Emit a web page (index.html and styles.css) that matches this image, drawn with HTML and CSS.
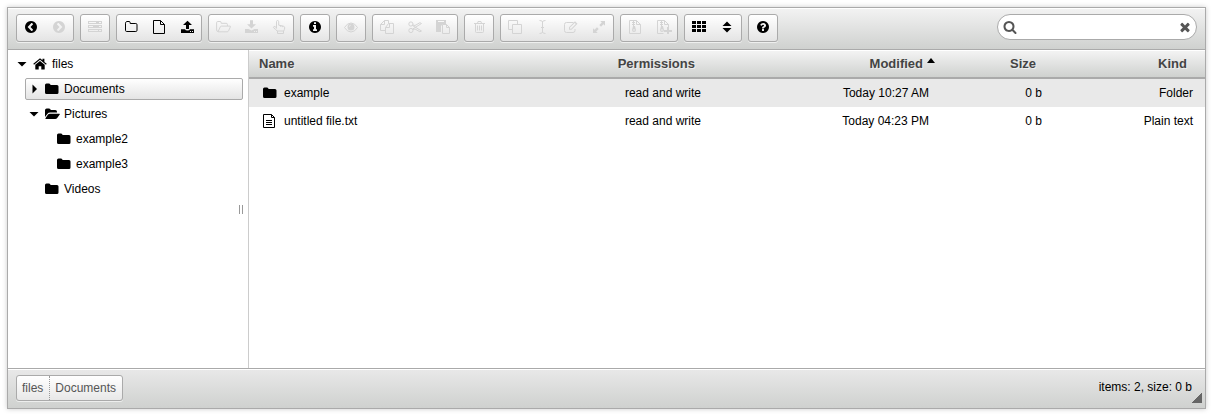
FILE: index.html
```html
<!DOCTYPE html>
<html lang="en">
<head>
<meta charset="utf-8">
<title>File manager</title>
<link rel="stylesheet" href="styles.css">
</head>
<body>
<svg class="sprite" aria-hidden="true">
  <symbol id="i-back" viewBox="0 0 1792 1792"><path d="M1037 1395l102-102q19-19 19-45t-19-45l-307-307 307-307q19-19 19-45t-19-45l-102-102q-19-19-45-19t-45 19l-454 454q-19 19-19 45t19 45l454 454q19 19 45 19t45-19zm627-499q0 209-103 385.5t-279.5 279.5-385.5 103-385.5-103-279.5-279.5-103-385.5 103-385.5 279.5-279.5 385.5-103 385.5 103 279.5 279.5 103 385.5z"/></symbol>
  <symbol id="i-forward" viewBox="0 0 1792 1792"><path transform="translate(1792 0) scale(-1 1)" d="M1037 1395l102-102q19-19 19-45t-19-45l-307-307 307-307q19-19 19-45t-19-45l-102-102q-19-19-45-19t-45 19l-454 454q-19 19-19 45t19 45l454 454q19 19 45 19t45-19zm627-499q0 209-103 385.5t-279.5 279.5-385.5 103-385.5-103-279.5-279.5-103-385.5 103-385.5 279.5-279.5 385.5-103 385.5 103 279.5 279.5 103 385.5z"/></symbol>
  <symbol id="i-mount" viewBox="0 0 14 14"><path fill-rule="evenodd" d="M0 1h14v3H0zM1 2v1h7V2zM11 2v1h2V2zM0 5h14v3H0zM1 6v1h4V6zM11 6v1h2V6zM0 9h14v3H0zM1 10v1h9v-1zM11 10v1h2v-1z"/></symbol>
  <symbol id="i-folder-o" viewBox="0 0 14 14"><path class="line" d="M1.5 3.2Q1.5 2 2.700 1.500H5q1.200 0 1.200 1.200v.8h5.600q1.200 0 1.200 1.200v5.600q0 1.200-1.200 1.200H2.700q-1.200 0-1.200-1.200z"/></symbol>
  <symbol id="i-file-o" viewBox="0 0 14 14"><path class="line" d="M8.5.5h-7v13h11v-9zM8.5.5v4h4"/></symbol>
  <symbol id="i-upload" viewBox="0 0 14 14"><path d="M7.500.7 12 5H9v4H6V5H3zM1 9.300h4q.4 1.200 2.500 1.200T10 9.300h4V13H1zM10 11v1h1v-1zM12 11v1h1v-1z" fill-rule="evenodd"/></symbol>
  <symbol id="i-download" viewBox="0 0 14 14"><path d="M6 .3h3v4h3L7.500 8.600 3 4.300H6zM1 9h3.500l3 1.500 3-1.500H14v4H1zM10 11v1h1v-1zM12 11v1h1v-1z" fill-rule="evenodd"/></symbol>
  <symbol id="i-open-o" viewBox="0 0 15 14"><path class="line" d="M2.500 11.300Q.6 12 .6 10V2.700q0-1.200 1.200-1.200H4q1.200 0 1.200 1.200v.6h5q1.200 0 1.200 1.200V6M2 11.800l2.300-5q.3-.7 1.200-.7H14q.8 0 .4.800l-1.900 4q-.4.900-1.200.900z"/></symbol>
  <symbol id="i-hand" viewBox="0 0 14 14"><path class="line" d="M4.500 8.500V1.700q0-1.200 1.100-1.200t1.100 1.200v3.500l4.500.9q1.500.3 1.500 1.700 0 1.500-1 3.200H5Q4 9.300 2 8.200 1 7.500 1.800 6.700q1-.8 2.700 1.100M5.500 11v2.500h6V11M8.800 5.500V7M10.700 6v1.200"/></symbol>
  <symbol id="i-info" viewBox="0 0 1792 1792"><path d="M1152 1376v-160q0-14-9-23t-23-9h-96v-512q0-14-9-23t-23-9h-320q-14 0-23 9t-9 23v160q0 14 9 23t23 9h96v320h-96q-14 0-23 9t-9 23v160q0 14 9 23t23 9h448q14 0 23-9t9-23zm-128-896v-160q0-14-9-23t-23-9h-192q-14 0-23 9t-9 23v160q0 14 9 23t23 9h192q14 0 23-9t9-23zm640 416q0 209-103 385.5t-279.5 279.5-385.5 103-385.5-103-279.5-279.5-103-385.5 103-385.5 279.5-279.5 385.5-103 385.5 103 279.500 279.500 103 385.500z"/></symbol>
  <symbol id="i-eye" viewBox="0 0 14 14"><path class="line" d="M.5 7.500Q3.200 3 7 3t6.500 4.500Q10.800 12 7 12T.5 7.500z"/><path fill-rule="evenodd" d="M7 3.500a3.500 3.500 0 1 0 0 7 3.500 3.500 0 0 0 0-7zM5 6.800Q5 5 7 4.700v.6Q5.700 5.600 5.600 6.800z"/></symbol>
  <symbol id="i-copy" viewBox="0 0 14 14"><path class="line" d="M5.500 10.500h-5v-6l4-4h4v3M4.500.5v4h-4M8.500 3.500h5v10h-8v-6zM9.500 3.500v4h-4"/></symbol>
  <symbol id="i-cut" viewBox="0 0 14 14"><circle class="line" cx="2.900" cy="4" r="2.100"/><circle class="line" cx="2.900" cy="10.500" r="2.100"/><path class="line" d="M4.500 5.500 13.500 11l-1.600.8L7 9 4.700 9.500M4.700 9 13.500 3.500l-1.600-.8L7 5.500 4.800 5"/></symbol>
  <symbol id="i-paste" viewBox="0 0 14 14"><path fill-rule="evenodd" d="M0 0h10v4H7L5 6v6H0zM2 1v1h6V1z"/><path class="line" d="M10.500 4.500h-4v9h7v-6zM10.500 4.500v3h3"/></symbol>
  <symbol id="i-trash" viewBox="0 0 14 14"><path class="line" d="M2 3.500h11M5.500 3.500 6 1.500h3l.5 2M3.500 3.500v8q0 1 1 1h6q1 0 1-1v-8M5.500 5.500v5M7.500 5.500v5M9.500 5.500v5"/></symbol>
  <symbol id="i-dup" viewBox="0 0 14 14"><path class="line" d="M4 9.500H.5v-9h9V4M4.500 4.500h9v9h-9z"/></symbol>
  <symbol id="i-rename" viewBox="0 0 14 14"><path class="line" d="M3.500.5q3 0 3 1.500 0-1.500 3-1.500M3.500 13.500q3 0 3-1.500 0 1.500 3 1.500M6.500 2v10M5 7.500h3"/></symbol>
  <symbol id="i-edit" viewBox="0 0 14 14"><path class="line" d="M9.500 2.500h-7q-2 0-2 2v6q0 2 2 2h6.500q2 0 2-2V9"/><path fill-rule="evenodd" d="M11 1.200 13.500 3.700 7.500 9.700H5V7.200zM6 7.500v1.200h1.200L11.800 4 10.700 3z"/></symbol>
  <symbol id="i-resize" viewBox="0 0 14 14"><path d="M8.300 1H13v4.700L11.500 4.200 9 6.700 7.300 5 9.800 2.500zM1 8.300 2.500 9.800 5 7.300 6.700 9 4.200 11.500 5.700 13H1z"/></symbol>
  <symbol id="i-zip" viewBox="0 0 14 14"><path class="line" d="M8.500.5h-7v13h11v-9zM8.500.5v4h4"/><path fill-rule="evenodd" d="M5 1h1v1h1v1H6v1h1v1H6v1h1l1 4q0 2-2 2t-2-2l1-4V5H4V4h1V3H4V2h1zM5 9.500v1h2v-1z"/></symbol>
  <symbol id="i-zip-add" viewBox="0 0 16 14"><path class="line" d="M7.500 13.500h-6V.5h7l4 4v3M8.500.5v4h4"/><path fill-rule="evenodd" d="M5 1h1v1h1v1H6v1h1v1H6v1h1l1 4q0 2-2 2t-2-2l1-4V5H4V4h1V3H4V2h1zM5 9.500v1h2v-1z"/><path d="M11 7h2v3h3v2h-3v3h-2v-3H8v-2h3z"/></symbol>
  <symbol id="i-grid" viewBox="0 0 14 14"><path d="M0 1h4v3H0zM5 1h4v3H5zM10 1h4v3h-4zM0 5h4v3H0zM5 5h4v3H5zM10 5h4v3h-4zM0 9h4v3H0zM5 9h4v3H5zM10 9h4v3h-4z"/></symbol>
  <symbol id="i-sort" viewBox="0 0 14 14"><path d="M7 1.500 11.500 6h-9zM2.500 8h9L7 12.500z"/></symbol>
  <symbol id="i-help" viewBox="0 0 1792 1792"><path d="M1024 1376v-192q0-14-9-23t-23-9h-192q-14 0-23 9t-9 23v192q0 14 9 23t23 9h192q14 0 23-9t9-23zm256-672q0-88-55.5-163t-138.500-116-170-41q-243 0-371 213-15 24 8 42l132 100q7 6 19 6 16 0 25-12 53-68 86-92 34-24 86-24 48 0 85.500 26t37.500 59q0 38-20 61t-68 45q-63 28-115.500 86.500t-52.500 125.500v36q0 14 9 23t23 9h192q14 0 23-9t9-23q0-19 21.500-49.500t54.500-49.500q32-18 49-28.500t46-35 44.500-48 28-60.500 12.500-81zm384 192q0 209-103 385.500t-279.500 279.500-385.500 103-385.500-103-279.500-279.500-103-385.500 103-385.500 279.500-279.500 385.500-103 385.500 103 279.500 279.500 103 385.500z"/></symbol>
  <symbol id="i-search" viewBox="0 0 1792 1792"><path d="M1216 832q0-185-131.500-316.500t-316.500-131.500-316.500 131.500-131.500 316.500 131.500 316.500 316.500 131.500 316.500-131.500 131.500-316.500zm512 832q0 52-38 90t-90 38q-54 0-90-38l-343-342q-179 124-399 124-143 0-273.500-55.500t-225-150-150-225-55.500-273.500 55.500-273.500 150-225 225-150 273.500-55.500 273.500 55.500 225 150 150 225 55.500 273.500q0 220-124 399l343 343q37 37 37 90z"/></symbol>
  <symbol id="i-times" viewBox="0 0 1792 1792"><path d="M1490 1322q0 40-28 68l-136 136q-28 28-68 28t-68-28l-294-294-294 294q-28 28-68 28t-68-28l-136-136q-28-28-28-68t28-68l294-294-294-294q-28-28-28-68t28-68l136-136q28-28 68-28t68 28l294 294 294-294q28-28 68-28t68 28l136 136q28 28 28 68t-28 68l-294 294 294 294q28 28 28 68z"/></symbol>
  <symbol id="i-folder" viewBox="0 0 14 14"><path d="M0 3Q0 1.500 1.500 1.500H4Q5.500 1.500 5.500 3H12q1.500 0 1.500 1.500v6q0 1.500-1.500 1.500H1.500Q0 12 0 10.500z"/></symbol>
  <symbol id="i-folder-open" viewBox="0 0 15 14"><path d="M0 10V3.200Q0 1.500 1.700 1.500H4q1.700 0 1.700 1.600h4.600Q12 3.100 12 4.800v.8H5.200q-1.800 0-2.700 1.100zM.3 11.400 3 7.600q.7-.9 2-.9h9.300q1 0 .4.800L12.200 11q-.7 1-2 1H1Q.1 12 .3 11.400z"/></symbol>
  <symbol id="i-home" viewBox="0 0 14 14"><path d="M7 3.900 11.700 7.800V12q0 .5-.5.5H8.300V9.200H5.700v3.300H2.800q-.5 0-.5-.5V7.800zM7 1.300l2.500 2V1.800h1.900v3.100l2.300 1.900-.7.900-6-5-6 5-.7-.9z"/></symbol>
  <symbol id="i-down" viewBox="0 0 14 14"><path d="M2.500 5h9L7 9.500z"/></symbol>
  <symbol id="i-right" viewBox="0 0 14 14"><path d="M5.500 2.500v9L10 7z"/></symbol>
  <symbol id="i-text" viewBox="0 0 14 14"><path class="line" d="M8.500.5h-8v13h11v-10zM8.500.5v3h3M3 6.500h6M3 8.500h6M3 10.500h6"/></symbol>
</svg>

<div class="app">
  <header class="toolbar">
    <div class="groups">
      <div class="group">
        <button aria-label="Back"><svg class="icon"><use href="#i-back"/></svg></button>
        <button aria-label="Forward" disabled><svg class="icon"><use href="#i-forward"/></svg></button>
      </div>
      <div class="group">
        <button aria-label="Mount volume" disabled><svg class="icon"><use href="#i-mount"/></svg></button>
      </div>
      <div class="group">
        <button aria-label="New folder"><svg class="icon"><use href="#i-folder-o"/></svg></button>
        <button aria-label="New file"><svg class="icon"><use href="#i-file-o"/></svg></button>
        <button aria-label="Upload"><svg class="icon"><use href="#i-upload"/></svg></button>
      </div>
      <div class="group">
        <button aria-label="Open" disabled><svg class="icon wide"><use href="#i-open-o"/></svg></button>
        <button aria-label="Download" disabled><svg class="icon"><use href="#i-download"/></svg></button>
        <button aria-label="Select" disabled><svg class="icon"><use href="#i-hand"/></svg></button>
      </div>
      <div class="group">
        <button aria-label="Info"><svg class="icon"><use href="#i-info"/></svg></button>
      </div>
      <div class="group">
        <button aria-label="Preview" disabled><svg class="icon"><use href="#i-eye"/></svg></button>
      </div>
      <div class="group">
        <button aria-label="Copy" disabled><svg class="icon"><use href="#i-copy"/></svg></button>
        <button aria-label="Cut" disabled><svg class="icon"><use href="#i-cut"/></svg></button>
        <button aria-label="Paste" disabled><svg class="icon"><use href="#i-paste"/></svg></button>
      </div>
      <div class="group">
        <button aria-label="Delete" disabled><svg class="icon"><use href="#i-trash"/></svg></button>
      </div>
      <div class="group">
        <button aria-label="Duplicate" disabled><svg class="icon"><use href="#i-dup"/></svg></button>
        <button aria-label="Rename" disabled><svg class="icon"><use href="#i-rename"/></svg></button>
        <button aria-label="Edit" disabled><svg class="icon"><use href="#i-edit"/></svg></button>
        <button aria-label="Resize" disabled><svg class="icon"><use href="#i-resize"/></svg></button>
      </div>
      <div class="group">
        <button aria-label="Extract" disabled><svg class="icon"><use href="#i-zip"/></svg></button>
        <button aria-label="Create archive" disabled><svg class="icon extra"><use href="#i-zip-add"/></svg></button>
      </div>
      <div class="group">
        <button aria-label="Icon view"><svg class="icon"><use href="#i-grid"/></svg></button>
        <button aria-label="Sort"><svg class="icon"><use href="#i-sort"/></svg></button>
      </div>
      <div class="group">
        <button aria-label="Help"><svg class="icon"><use href="#i-help"/></svg></button>
      </div>
    </div>
    <form class="search">
      <svg class="icon"><use href="#i-search"/></svg>
      <input type="text" aria-label="Search">
      <button type="reset" aria-label="Clear"><svg class="icon"><use href="#i-times"/></svg></button>
    </form>
  </header>

  <div class="workzone">
    <nav class="tree">
      <a class="node" href="#files"><svg class="icon arrow"><use href="#i-down"/></svg><svg class="icon"><use href="#i-home"/></svg>files</a>
      <div class="branch">
        <a class="node active" href="#documents"><svg class="icon arrow"><use href="#i-right"/></svg><svg class="icon"><use href="#i-folder"/></svg>Documents</a>
        <a class="node" href="#pictures"><svg class="icon arrow"><use href="#i-down"/></svg><svg class="icon wide"><use href="#i-folder-open"/></svg>Pictures</a>
        <div class="branch">
          <a class="node" href="#example2"><span class="arrow"></span><svg class="icon"><use href="#i-folder"/></svg>example2</a>
          <a class="node" href="#example3"><span class="arrow"></span><svg class="icon"><use href="#i-folder"/></svg>example3</a>
        </div>
        <a class="node" href="#videos"><span class="arrow"></span><svg class="icon"><use href="#i-folder"/></svg>Videos</a>
      </div>
      <span class="grip"></span>
    </nav>
    <main class="files">
      <table>
        <thead>
          <tr><th class="name">Name</th><th class="perm">Permissions</th><th class="date"><span class="sorted">Modified</span></th><th class="size">Size</th><th class="kind">Kind</th></tr>
        </thead>
        <tbody>
          <tr><td><span class="file"><svg class="icon"><use href="#i-folder"/></svg>example</span></td><td>read and write</td><td>Today 10:27 AM</td><td>0 b</td><td>Folder</td></tr>
          <tr><td><span class="file"><svg class="icon"><use href="#i-text"/></svg>untitled file.txt</span></td><td>read and write</td><td>Today 04:23 PM</td><td>0 b</td><td>Plain text</td></tr>
        </tbody>
      </table>
    </main>
  </div>

  <footer class="statusbar">
    <div class="path"><a href="#files">files</a><a href="#documents">Documents</a></div>
    <div class="summary">items: 2, size: 0 b</div>
    <span class="resizer"></span>
  </footer>
</div>
</body>
</html>
```
FILE: styles.css
```css
* {
  box-sizing: border-box;
}

body {
  margin: 0;
  padding: 7px 7px 6px;
  height: 100vh;
  background: #fff;
  color: #000;
  font: 12px/16px "Liberation Sans", Arial, sans-serif;
}

a {
  color: inherit;
  text-decoration: none;
}

button {
  border: 0;
  padding: 0;
  background: none;
  color: inherit;
}

.sprite {
  display: none;
}

.icon {
  display: block;
  flex: none;
  width: 14px;
  height: 14px;
  fill: currentColor;
  overflow: visible;
}

.icon.wide {
  width: 15px;
  margin-right: -1px;
}

.icon.extra {
  width: 16px;
  margin-right: -2px;
}

.line {
  fill: none;
  stroke: currentColor;
  stroke-width: 1px;
}

.app {
  display: flex;
  flex-direction: column;
  height: 100%;
  border: 1px solid #aaa;
  box-shadow: 0 0 5px #ccc;
}

/* Toolbar */
.toolbar {
  display: flex;
  justify-content: space-between;
  align-items: flex-start;
  gap: 12px;
  padding: 6px 8px 7px;
  border-bottom: 1px solid #aaa;
  background: linear-gradient(#f3f3f3, #cfd1cf);
  box-shadow: inset 0 1px #fff;
}

.groups {
  display: flex;
  flex-wrap: wrap;
  gap: 6px;
}

.group {
  display: flex;
  border: 1px solid #aaa;
  border-radius: 3px;
  background: linear-gradient(#fff, #e4e4e4);
  box-shadow: 0 1px rgba(255, 255, 255, 0.6);
}

.group button {
  padding: 5px 7px 7px;
}

.group button:disabled {
  color: #d4d4d4;
}

.search {
  display: flex;
  align-items: center;
  gap: 4px;
  width: 200px;
  height: 26px;
  padding: 0 4px 0 5px;
  border: 1px solid #aaa;
  border-radius: 13px;
  background: #fff;
  color: #555;
}

.search input {
  flex: 1;
  min-width: 0;
  border: 0;
  padding: 0;
  outline: 0;
  background: none;
  font: inherit;
}

/* Work area */
.workzone {
  display: flex;
  flex: 1;
  min-height: 0;
}

.tree {
  position: relative;
  display: flex;
  flex: none;
  flex-direction: column;
  gap: 3px;
  width: 241px;
  padding: 3px 5px;
  border-right: 1px solid #ccc;
}

.branch {
  display: flex;
  flex-direction: column;
  gap: 3px;
  padding-left: 12px;
}

.node {
  display: flex;
  align-items: center;
  gap: 5px;
  height: 22px;
  padding: 0 0 1px 1px;
  border: 1px solid transparent;
  border-radius: 2px;
}

.node .arrow {
  width: 14px;
  margin-right: -1px;
}

.node.active {
  border-color: #aaa;
  background: linear-gradient(#fff, #e4e4e4);
}

.grip {
  position: absolute;
  right: 5px;
  top: 155px;
  width: 4px;
  height: 9px;
  border: solid #999;
  border-width: 0 1px;
}

.files {
  flex: 1;
  min-width: 0;
}

table {
  width: 100%;
  border-collapse: separate;
  border-spacing: 0;
  table-layout: fixed;
}

th {
  height: 29px;
  padding: 0 18px 0 10px;
  border-bottom: 2px solid #aaa;
  background: linear-gradient(#fff 1px, #f3f3f3 1px, #cfd1cf);
  color: #444;
  font-size: 13px;
  text-align: right;
  text-shadow: 1px 1px #eee;
}

th.name {
  text-align: left;
}

th.perm,
th.date {
  width: 228px;
}

th.size {
  width: 113px;
}

th.kind {
  width: 151px;
}

.sorted {
  position: relative;
}

.sorted::after {
  content: "";
  position: absolute;
  right: -12px;
  top: 2px;
  border: 4px solid transparent;
  border-top: 0;
  border-bottom: 5px solid #000;
}

td {
  height: 28px;
  padding: 0 12px 0 14px;
  text-align: right;
}

tbody tr:nth-child(odd) {
  background: #e9e9e9;
}

.file {
  display: flex;
  align-items: center;
  gap: 7px;
}

/* Status bar */
.statusbar {
  position: relative;
  display: flex;
  justify-content: space-between;
  align-items: flex-start;
  padding: 6px 13px 7px 8px;
  border-top: 1px solid #aaa;
  background: linear-gradient(#fff 1px, #e8e8e8 1px, #cfd1cf);
}

.path {
  display: flex;
  border: 1px solid #aaa;
  border-radius: 3px;
  background: linear-gradient(#fff, #e8e8e8);
  box-shadow: 0 1px rgba(255, 255, 255, 0.6);
  color: #555;
}

.path a {
  padding: 4px 6px 4px 5px;
}

.path a + a {
  border-left: 1px dotted #999;
}

.summary {
  padding: 4px 0;
}

.resizer {
  position: absolute;
  right: 3px;
  bottom: 5px;
  width: 10px;
  height: 10px;
  background: linear-gradient(135deg, transparent 50%, #666 50%);
}
```
